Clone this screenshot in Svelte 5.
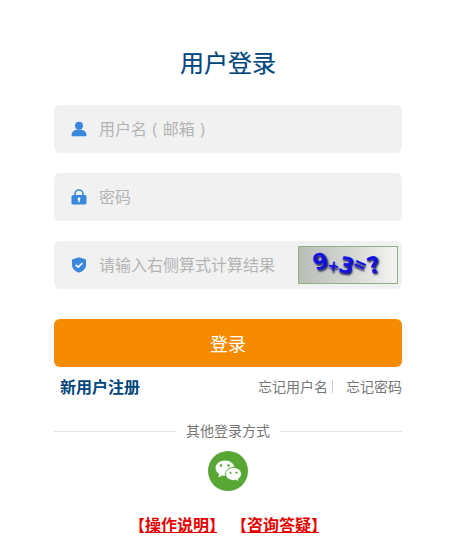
<script>
  let username = $state("");
  let password = $state("");
  let captcha = $state("");

  // tilted glyphs of the captcha picture
  const captchaChars = [
    { ch: "9", rot: -16, y: -3, size: 22 },
    { ch: "+", rot: 8, y: 1, size: 15 },
    { ch: "3", rot: 14, y: 1, size: 22 },
    { ch: "=", rot: 24, y: -1, size: 17 },
    { ch: "?", rot: -14, y: 0, size: 23 },
  ];
</script>

<main class="login">
  <h1>用户登录</h1>

  <form onsubmit={(e) => e.preventDefault()}>
    <label class="field">
      <svg class="icon" viewBox="0 0 16 16" aria-hidden="true">
        <circle cx="8" cy="4.800" r="4" fill="#3a87dc" />
        <path d="M.6 14.200c0-3.500 2.900-5.600 7.400-5.600s7.400 2.100 7.400 5.600c0 .6-.4 1-1 1H1.600c-.6 0-1-.4-1-1z" fill="#3a87dc" />
      </svg>
      <input class="spaced" bind:value={username} placeholder="用户名 ( 邮箱 )" />
    </label>

    <label class="field">
      <svg class="icon" viewBox="0 0 16 16" aria-hidden="true">
        <path d="M4 7V4.900a4 4 0 0 1 8 0V7" fill="none" stroke="#3a87dc" stroke-width="1.500" />
        <rect x=".5" y="6" width="15" height="9.500" rx="1.500" fill="#3a87dc" />
        <circle cx="8" cy="9.800" r="1.400" fill="#fff" />
        <rect x="7.300" y="10" width="1.400" height="3.200" fill="#fff" />
      </svg>
      <input type="password" bind:value={password} placeholder="密码" />
    </label>

    <label class="field">
      <svg class="icon" viewBox="0 0 16 16" aria-hidden="true">
        <path d="M8 .3l7 2.300v5.200c0 3.800-3 6.600-7 7.900-4-1.300-7-4.100-7-7.900V2.600z" fill="#3a87dc" />
        <path d="M4.600 7.900l2.500 2.300 4.300-4" fill="none" stroke="#fff" stroke-width="1.600" />
      </svg>
      <input bind:value={captcha} placeholder="请输入右侧算式计算结果" />
      <span class="captcha" aria-label="验证码">
        {#each captchaChars as c}
          <b style="font-size: {c.size}px; transform: translateY({c.y}px) rotate({c.rot}deg)">{c.ch}</b>
        {/each}
      </span>
    </label>

    <button type="submit">登录</button>
  </form>

  <div class="links">
    <a class="register" href="#register">新用户注册</a>
    <span class="forgot">
      <a href="#name">忘记用户名</a><i></i><a href="#pwd">忘记密码</a>
    </span>
  </div>

  <div class="divider"><span>其他登录方式</span></div>

  <a class="wechat" href="#wechat" aria-label="微信登录">
    <svg viewBox="0 0 40 40" width="40" height="40" aria-hidden="true">
      <path d="M17 9.500c-5.200 0-9.400 3.400-9.400 7.600 0 2.500 1.400 4.600 3.500 6l-.8 3.300 3.600-2c1 .3 2 .4 3.100.4 5.200 0 9.400-3.400 9.400-7.700s-4.200-7.600-9.400-7.600z" fill="#fff" />
      <path d="M33.500 23c0-3.600-3.500-6.500-8-6.500s-8 2.900-8 6.500 3.500 6.500 8 6.500c.9 0 1.700-.1 2.500-.3l3.100 1.700-.7-3c1.900-1.200 3.100-2.900 3.100-4.900z" fill="#fff" stroke="#58a735" stroke-width="1" />
      <circle cx="13" cy="14.500" r="1.300" fill="#58a735" />
      <circle cx="20.500" cy="14.500" r="1.300" fill="#58a735" />
      <circle cx="22.500" cy="21.800" r="1.100" fill="#58a735" />
      <circle cx="28.500" cy="21.800" r="1.100" fill="#58a735" />
    </svg>
  </a>

  <div class="help">
    <a href="#guide"><span>【</span>操作说明】</a>
    <a href="#ask"><span>【</span>咨询答疑】</a>
  </div>
</main>

<style>
  :global(body) {
    margin: 0;
    background: #ffffff;
    font-family: "Open Sans", "Noto Sans CJK SC", sans-serif;
  }

  :global(*) {
    box-sizing: border-box;
  }

  .login {
    width: 462px;
    height: 550px;
    overflow: hidden;
    padding: 45px 60px 0 54px;
  }

  h1 {
    margin: 0 0 24px;
    height: 36px;
    color: #00457c;
    font-size: 24px;
    font-weight: 400;
    line-height: 36px;
    text-align: center;
    -webkit-text-stroke: 0.2px #00457c;
  }

  form {
    display: flex;
    flex-direction: column;
    gap: 20px;
  }

  .field {
    display: flex;
    align-items: center;
    height: 48px;
    padding-left: 17px;
    border-radius: 6px;
    background: #f1f1f1;
  }

  .icon {
    flex: none;
    width: 16px;
    height: 16px;
    margin-right: 12px;
  }

  input {
    flex: 1;
    min-width: 0;
    border: none;
    outline: none;
    padding: 0;
    background: transparent;
    color: #333333;
    font-family: inherit;
    font-size: 16px;
  }

  input::placeholder {
    color: #b4b4b4;
    opacity: 1;
  }

  .spaced {
    word-spacing: 1.300px;
  }

  .captcha {
    flex: none;
    display: flex;
    align-items: center;
    justify-content: center;
    gap: 0;
    width: 100px;
    height: 38px;
    margin-right: 4px;
    padding-right: 3px;
    border: 1px solid #8fb184;
    background: linear-gradient(90deg, #b9bdb6 0%, #d6d8d4 55%, #f4f4f2 100%);
  }

  .captcha b {
    display: block;
    margin: 0 -0.500px;
    color: #1212e0;
    font-family: "DejaVu Sans", sans-serif;
    font-weight: 700;
    line-height: 1;
    text-shadow: 1px 2px 2px #23235a;
  }

  button {
    height: 48px;
    margin-top: 10px;
    border: none;
    border-radius: 6px;
    background: #f68a00;
    color: #ffffff;
    font-family: inherit;
    font-size: 18px;
  }

  .links {
    display: flex;
    align-items: center;
    justify-content: space-between;
    height: 24px;
    margin-top: 7px;
    padding-left: 6px;
  }

  a {
    text-decoration: none;
  }

  .register {
    color: #00457c;
    font-size: 16px;
    font-weight: 700;
  }

  .forgot {
    display: flex;
    align-items: center;
    font-size: 14px;
  }

  .forgot a {
    color: #777777;
  }

  .forgot i {
    width: 1px;
    height: 13px;
    margin: 0 13px 0 4px;
    background: #cccccc;
  }

  .divider {
    display: flex;
    align-items: center;
    gap: 10px;
    height: 20px;
    margin-top: 23px;
    color: #777777;
    font-size: 14px;
  }

  .divider span {
    margin-top: -2px;
  }

  .divider::before,
  .divider::after {
    content: "";
    flex: 1;
    height: 1px;
    background: #e6e6e6;
  }

  .wechat {
    display: block;
    width: 40px;
    height: 40px;
    margin: 10px auto 0;
    border-radius: 50%;
    background: #58a735;
  }

  .help {
    display: flex;
    justify-content: center;
    gap: 22px;
    margin-top: 22px;
    font-size: 16px;
    font-weight: 700;
    line-height: 24px;
    font-feature-settings: "halt";
  }

  .help a {
    color: #e60000;
    text-decoration: underline;
  }

  .help span {
    display: inline-block;
  }
</style>
